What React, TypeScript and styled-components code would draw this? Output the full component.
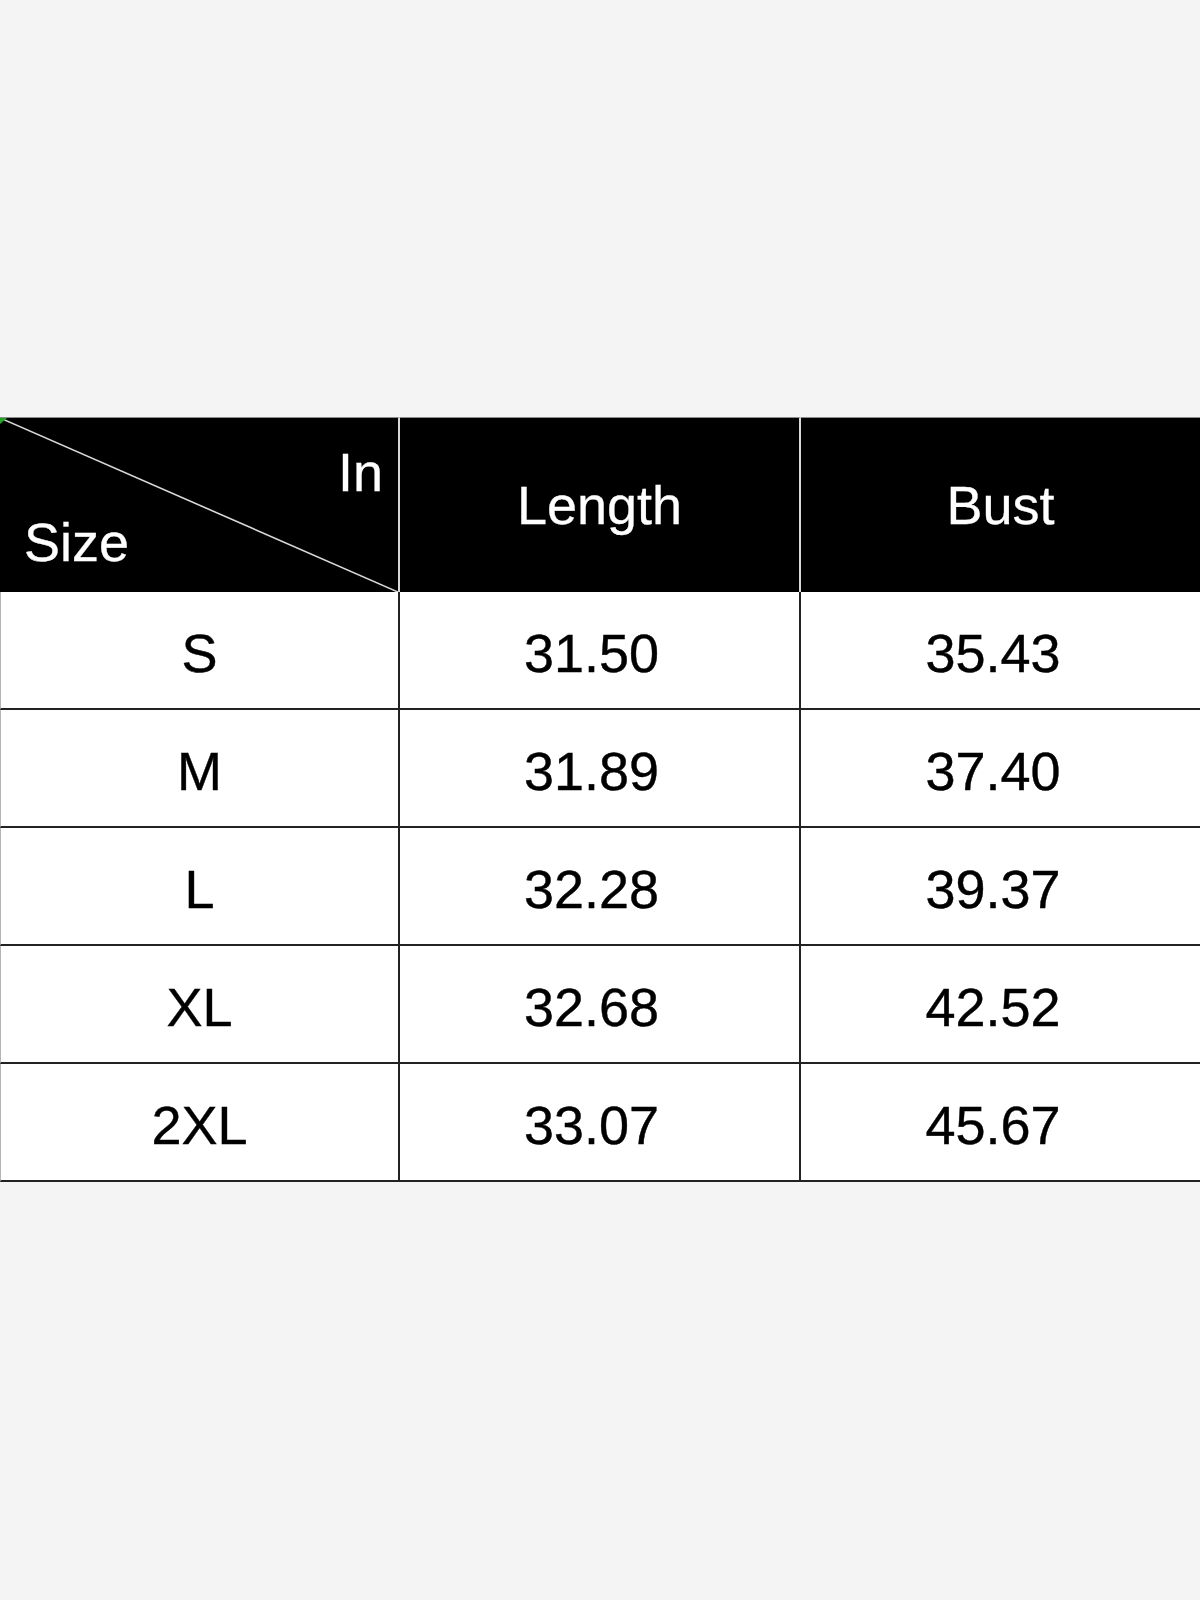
import React from "react";
import styled, { createGlobalStyle } from "styled-components";

const Global = createGlobalStyle`
  html, body {
    margin: 0;
    padding: 0;
    background: #f4f4f4;
  }
  body {
    font-family: "Liberation Sans", Arial, sans-serif;
  }
`;

const Page = styled.div`
  width: 1200px;
  min-height: 1600px;
  padding-top: 417px;
  box-sizing: border-box;
  overflow: hidden;
`;

const Table = styled.div`
  display: grid;
  grid-template-columns: 400px 401px 399px;
  width: 1200px;
`;

const HeadCell = styled.div<{ $divider?: boolean }>`
  position: relative;
  height: 175px;
  box-sizing: border-box;
  background: #000;
  border-top: 1px solid #8c8c8c;
  border-right: ${(p) => (p.$divider ? "2px solid #d8d8d8" : "none")};
  color: #fff;
  font-size: 54px;
  line-height: 54px;
  display: flex;
  align-items: center;
  justify-content: center;
  -webkit-text-stroke: 0.3px #fff;
`;

const CornerCell = styled(HeadCell)`
  flex-direction: column;
  align-items: stretch;
  justify-content: space-between;
  padding: 27px 15px 23px 24px;
`;

const CornerLabel = styled.span<{ $end?: boolean }>`
  position: relative;
  z-index: 1;
  align-self: ${(p) => (p.$end ? "flex-end" : "flex-start")};
`;

const Diagonal = styled.svg`
  position: absolute;
  left: 0;
  top: 0;
  width: 100%;
  height: 100%;
  pointer-events: none;
`;

const Mark = styled.span`
  position: absolute;
  left: 0;
  top: 0;
  width: 0;
  height: 0;
  border-top: 6px solid #1fa61f;
  border-right: 7px solid transparent;
`;

const Cell = styled.div<{ $first?: boolean; $last?: boolean; $shift?: number }>`
  height: 118px;
  box-sizing: border-box;
  background: #fff;
  border-bottom: 2px solid #222;
  border-right: ${(p) => (p.$last ? "none" : "2px solid #222")};
  border-left: ${(p) => (p.$first ? "1px solid #b5b5b5" : "none")};
  color: #000;
  font-size: 54px;
  line-height: 54px;
  display: flex;
  align-items: center;
  justify-content: center;
  padding-top: 5px;
  padding-right: ${(p) => p.$shift ?? 0}px;
  -webkit-text-stroke: 0.4px #000;
`;

const rows: [string, string, string][] = [
  ["S", "31.50", "35.43"],
  ["M", "31.89", "37.40"],
  ["L", "32.28", "39.37"],
  ["XL", "32.68", "42.52"],
  ["2XL", "33.07", "45.67"],
];

export default function App() {
  return (
    <>
      <Global />
      <Page>
        <Table>
          <CornerCell $divider>
            <Diagonal viewBox="0 0 100 100" preserveAspectRatio="none">
              <line
                x1="0"
                y1="0"
                x2="100"
                y2="100"
                stroke="#d9d9d9"
                strokeWidth="1.6"
                vectorEffect="non-scaling-stroke"
              />
            </Diagonal>
            <Mark />
            <CornerLabel $end>In</CornerLabel>
            <CornerLabel>Size</CornerLabel>
          </CornerCell>
          <HeadCell $divider>Length</HeadCell>
          <HeadCell>Bust</HeadCell>
          {rows.map(([size, len, bust]) => (
            <React.Fragment key={size}>
              <Cell $first>{size}</Cell>
              <Cell $shift={16}>{len}</Cell>
              <Cell $last $shift={15}>{bust}</Cell>
            </React.Fragment>
          ))}
        </Table>
      </Page>
    </>
  );
}
